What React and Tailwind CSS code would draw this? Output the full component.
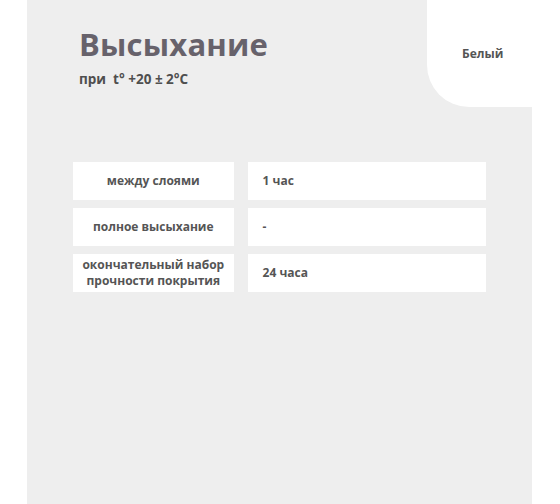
export default function App() {
  const rows = [
    { label: ["между слоями"], value: "1 час" },
    { label: ["полное высыхание"], value: "-" },
    { label: ["окончательный набор", "прочности покрытия"], value: "24 часа" },
  ];

  return (
    <div className="relative flex h-[504px] w-[560px] bg-white font-['Open_Sans',sans-serif]">
      <div className="ml-[27px] h-full w-[505px] bg-[#eeeeee] px-[46px] pt-[25px]">
        <div className="pl-[6px]">
          <h1 className="text-[31px] font-bold leading-[38px] tracking-[0.2px] text-[#67626b]">
            Высыхание
          </h1>
          <p className="mt-[6px] text-[13.5px] font-bold text-[#4f4f4f]">
            при&nbsp; t° +20 ± 2°C
          </p>
        </div>

        <div className="mt-[73px] flex flex-col gap-[8px]">
          {rows.map((row) => (
            <div key={row.value} className="flex gap-[14px]">
              <div className="flex h-[38px] w-[161px] flex-col items-center justify-center bg-white text-center text-[12px] font-bold leading-[16px] text-[#555]">
                {row.label.map((l) => (
                  <span key={l}>{l}</span>
                ))}
              </div>
              <div className="flex h-[38px] w-[239px] items-center bg-white pl-[15px] text-[12px] font-bold text-[#555]">
                {row.value}
              </div>
            </div>
          ))}
        </div>
      </div>

      <div className="absolute right-0 top-0 h-[107px] w-[133px] rounded-bl-[42px] bg-white pl-[35px] pt-[45px] text-[12px] font-bold text-[#555]">
        Белый
      </div>
    </div>
  );
}
